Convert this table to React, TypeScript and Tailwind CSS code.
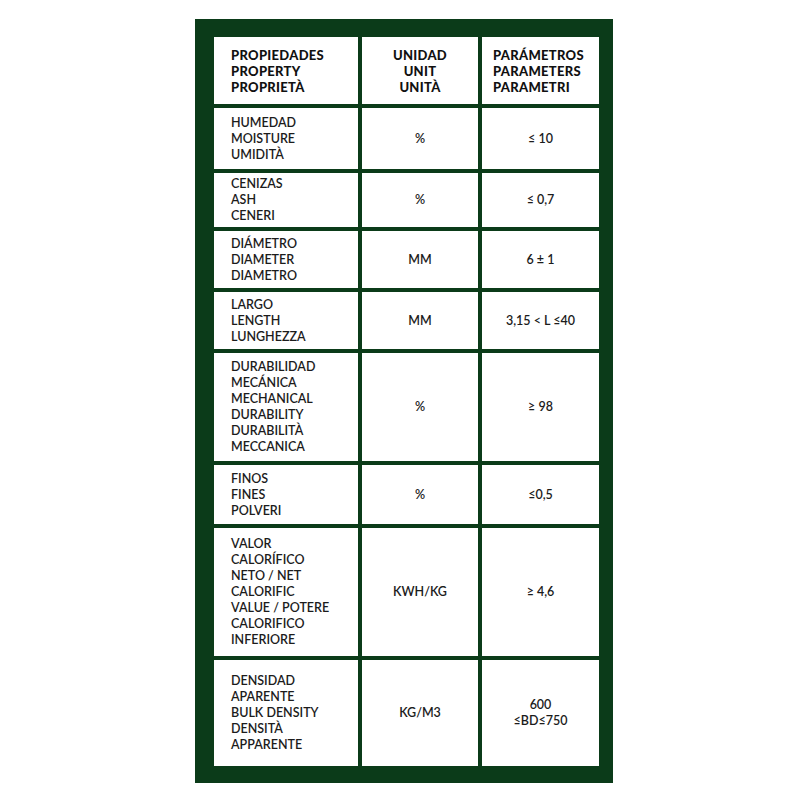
import React from "react";

type Row = { prop: string[]; unit: string; param: string[]; h: string };

const rows: Row[] = [
  { prop: ["HUMEDAD", "MOISTURE", "UMIDITÀ"], unit: "%", param: ["≤ 10"], h: "h-[61px]" },
  { prop: ["CENIZAS", "ASH", "CENERI"], unit: "%", param: ["≤ 0,7"], h: "h-[54px]" },
  { prop: ["DIÁMETRO", "DIAMETER", "DIAMETRO"], unit: "MM", param: ["6 ± 1"], h: "h-[57px]" },
  { prop: ["LARGO", "LENGTH", "LUNGHEZZA"], unit: "MM", param: ["3,15 < L ≤40"], h: "h-[57px]" },
  {
    prop: ["DURABILIDAD", "MECÁNICA", "MECHANICAL", "DURABILITY", "DURABILITÀ", "MECCANICA"],
    unit: "%",
    param: ["≥ 98"],
    h: "h-[108px]",
  },
  { prop: ["FINOS", "FINES", "POLVERI"], unit: "%", param: ["≤0,5"], h: "h-[59px]" },
  {
    prop: ["VALOR", "CALORÍFICO", "NETO / NET", "CALORIFIC", "VALUE / POTERE", "CALORIFICO", "INFERIORE"],
    unit: "KWH/KG",
    param: ["≥ 4,6"],
    h: "h-[128px]",
  },
  {
    prop: ["DENSIDAD", "APARENTE", "BULK DENSITY", "DENSITÀ", "APPARENTE"],
    unit: "KG/M3",
    param: ["600", "≤BD≤750"],
    h: "h-[106px]",
  },
];

export default function App() {
  return (
    <div className="w-[800px] h-[800px] bg-white flex items-start justify-start">
      <div
        className="ml-[195px] mt-[19px] w-[418px] bg-[#0b3b19] pl-[19px] pr-[14px] pt-[18px] pb-[17px]"
        style={{ fontFamily: "Lato, 'Liberation Sans', sans-serif" }}
      >
        <div className="grid grid-cols-[144px_116px_117px] gap-[4px] text-[12.5px] leading-[16px] text-[#1c1c1c]">
          {/* header */}
          <div className="h-[67px] bg-white flex flex-col justify-center pl-[17px] font-black text-[13px] tracking-[0.3px] text-[#111111]">
            <span>PROPIEDADES</span>
            <span>PROPERTY</span>
            <span>PROPRIETÀ</span>
          </div>
          <div className="h-[67px] bg-white flex flex-col justify-center items-center font-black text-[13px] tracking-[0.3px] text-[#111111]">
            <span>UNIDAD</span>
            <span>UNIT</span>
            <span>UNITÀ</span>
          </div>
          <div className="h-[67px] bg-white flex flex-col justify-center pl-[11px] font-black text-[13px] tracking-[0.3px] text-[#111111]">
            <span>PARÁMETROS</span>
            <span>PARAMETERS</span>
            <span>PARAMETRI</span>
          </div>
          {rows.map((r, i) => (
            <React.Fragment key={i}>
              <div className={`${r.h} bg-white flex flex-col justify-center pl-[17px] font-semibold`}>
                {r.prop.map((p, j) => (
                  <span key={j}>{p}</span>
                ))}
              </div>
              <div className={`${r.h} bg-white flex flex-col justify-center items-center font-semibold`}>
                <span>{r.unit}</span>
              </div>
              <div className={`${r.h} bg-white flex flex-col justify-center items-center font-semibold`}>
                {r.param.map((p, j) => (
                  <span key={j}>{p}</span>
                ))}
              </div>
            </React.Fragment>
          ))}
        </div>
      </div>
    </div>
  );
}
